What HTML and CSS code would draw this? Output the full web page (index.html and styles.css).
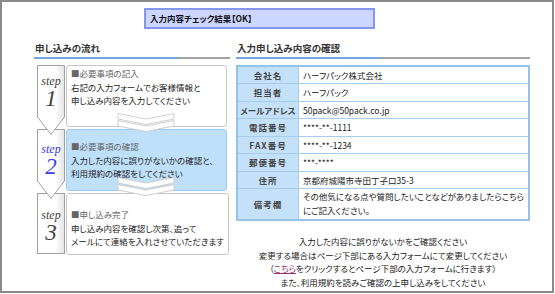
FILE: index.html
```html
<!DOCTYPE html>
<html lang="ja">
<head>
<meta charset="utf-8">
<title>入力内容チェック結果</title>
<link rel="stylesheet" href="styles.css">
</head>
<body>
<div class="frame">
  <div class="title">入力内容チェック結果【OK】</div>
  <div class="cols">
    <section class="flow">
      <h2 class="heading">申し込みの流れ</h2>
      <ol class="steps">
        <li class="step step-1">
          <div class="tab">
            <svg class="tab-shape" width="28" height="70" viewBox="0 0 28 70"><defs><linearGradient id="tg1" x1="0" x2="1" y1="0" y2="0"><stop offset="0" stop-color="#fff"/><stop offset="0.65" stop-color="#fff"/><stop offset="1" stop-color="#e4e4e4"/></linearGradient></defs><polygon points="0.5,0.5 27.5,0.5 27.5,52 14,69.5 0.5,52" fill="url(#tg1)" stroke="#a0a0a0"/></svg>
            <span class="tab-word">step</span>
            <span class="tab-num">1</span>
          </div>
          <div class="body">
            <p class="step-title">■必要事項の記入</p>
            <p>右記の入力フォームでお客様情報と<br>申し込み内容を入力してください</p>
            <svg class="chev" width="58" height="21" viewBox="0 0 58 21"><polygon points="1,0.5 29,6 57,0.5 57,6 29,11.5 1,6" fill="#fff" stroke="#cfcfcf"/><polygon points="1,7.5 29,13 57,7.5 57,13 29,18.5 1,13" fill="#fff" stroke="#cfcfcf"/></svg>
          </div>
        </li>
        <li class="step step-2">
          <div class="tab">
            <svg class="tab-shape" width="28" height="70" viewBox="0 0 28 70"><defs><linearGradient id="tg2" x1="0" x2="1" y1="0" y2="0"><stop offset="0" stop-color="#fff"/><stop offset="0.65" stop-color="#fff"/><stop offset="1" stop-color="#e4e4e4"/></linearGradient></defs><polygon points="0.5,0.5 27.5,0.5 27.5,52 14,69.5 0.5,52" fill="url(#tg2)" stroke="#a0a0a0"/></svg>
            <span class="tab-word">step</span>
            <span class="tab-num">2</span>
          </div>
          <div class="body">
            <p class="step-title">■必要事項の確認</p>
            <p>入力した内容に誤りがないかの確認と、<br>利用規約の確認をしてください</p>
            <svg class="chev" width="58" height="21" viewBox="0 0 58 21"><polygon points="1,0.5 29,6 57,0.5 57,6 29,11.5 1,6" fill="#fff" stroke="#cfcfcf"/><polygon points="1,7.5 29,13 57,7.5 57,13 29,18.5 1,13" fill="#fff" stroke="#cfcfcf"/></svg>
          </div>
        </li>
        <li class="step step-3">
          <div class="tab">
            <svg class="tab-shape" width="28" height="62" viewBox="0 0 28 62"><defs><linearGradient id="tg3" x1="0" x2="1" y1="0" y2="0"><stop offset="0" stop-color="#fff"/><stop offset="0.65" stop-color="#fff"/><stop offset="1" stop-color="#e4e4e4"/></linearGradient></defs><rect x="0.5" y="0.5" width="27" height="60" fill="url(#tg3)" stroke="#a0a0a0"/></svg>
            <span class="tab-word">step</span>
            <span class="tab-num">3</span>
          </div>
          <div class="body">
            <p class="step-title">■申し込み完了</p>
            <p>申し込み内容を確認し次第、追って<br>メールにて連絡を入れさせていただきます</p>
          </div>
        </li>
      </ol>
    </section>
    <section class="confirm">
      <h2 class="heading">入力申し込み内容の確認</h2>
      <table class="entry">
        <tr><th>会社名</th><td>ハーフパック株式会社</td></tr>
        <tr><th>担当者</th><td>ハーフパック</td></tr>
        <tr><th class="tight">メールアドレス</th><td>50pack@50pack.co.jp</td></tr>
        <tr><th>電話番号</th><td>****-**-1111</td></tr>
        <tr><th>FAX番号</th><td>****-**-1234</td></tr>
        <tr><th>郵便番号</th><td>***-****</td></tr>
        <tr><th>住所</th><td>京都府城陽市寺田丁子口35-3</td></tr>
        <tr class="tall"><th>備考欄</th><td>その他気になる点や質問したいことなどがありましたらこちら<br>にご記入ください。</td></tr>
      </table>
      <p class="note">入力した内容に誤りがないかをご確認ください<br>変更する場合はページ下部にある入力フォームにて変更してください<br>（<a href="#form">こちら</a>をクリックするとページ下部の入力フォームに行きます）<br>また、利用規約を読みご確認の上申し込みをしてください</p>
    </section>
  </div>
</div>
</body>
</html>
```

FILE: styles.css
```css
* { box-sizing: border-box; margin: 0; padding: 0; }
html, body { width: 555px; height: 294px; overflow: hidden; background: #fff; }
body {
  font-family: "Noto Sans CJK JP", "Noto Sans", sans-serif;
  font-size: 8.5px;
  color: #222;
  font-feature-settings: "palt";
}
.frame {
  width: 554px;
  height: 293px;
  border: 2px solid #8a8a8a;
}
.title {
  margin: 6px 0 0 142px;
  width: 231px;
  height: 21px;
  border: 2px solid #8696ec;
  background: #ccd6ff;
  font-weight: bold;
  padding-left: 4px;
  line-height: 17px;
  color: #111;
}
.cols {
  display: flex;
  gap: 6px;
  margin-top: 12px;
  padding-left: 32px;
}
.flow { width: 196px; }
.confirm { width: 294px; }
.heading {
  font-size: 9.5px;
  font-weight: bold;
  line-height: 14px;
  padding: 0 0 4px 1px;
  color: #333;
  background: linear-gradient(to right, #72a8de 144px, #a3a3a3 144px) left bottom / 100% 2px no-repeat;
}
.steps {
  list-style: none;
  margin-top: 6px;
  padding: 0 3px;
  display: flex;
  flex-direction: column;
  gap: 2px;
}
.step {
  display: flex;
  height: 62px;
  position: relative;
}
.step-1 { z-index: 3; }
.step-2 { z-index: 2; }
.step-3 { z-index: 1; }
.tab {
  position: relative;
  width: 28px;
  flex: none;
  display: flex;
  flex-direction: column;
  align-items: center;
  font-family: "Liberation Serif", serif;
  font-style: italic;
  color: #444;
}
.tab-shape { position: absolute; top: 0; left: 0; }
.tab-word, .tab-num { position: relative; display: block; }
.tab-word { font-size: 12px; line-height: 11px; }
.tab-num { font-size: 23px; line-height: 24px; }
.step-1 .tab { padding-top: 11px; }
.step-2 .tab { padding-top: 15px; color: #4040ee; }
.step-3 .tab { padding-top: 17px; }
.body {
  flex: 1;
  margin-left: 1px;
  border: 1px solid #c8c8c8;
  border-radius: 3px;
  padding: 1px 4px 0;
  line-height: 13.5px;
  position: relative;
  white-space: nowrap;
  background: #fff;
}
.step-2 .body {
  background: #bfe0fb;
  border-color: #9fcbef;
  padding-top: 10px;
}
.step-3 .body { padding-top: 14px; }
.step-title { color: #666; }
.chev {
  position: absolute;
  left: 50%;
  margin-left: -30px;
  bottom: -8px;
}
.entry {
  margin-top: 6px;
  width: 294px;
  border-collapse: collapse;
  border: 2px solid #94c2e9;
}
.entry th, .entry td {
  border: 1px solid #a6cdee;
  height: 17.5px;
  line-height: 14px;
  padding: 0 4px;
  white-space: nowrap;
}
.entry th {
  width: 68px;
  background: #c5e1f9;
  color: #444;
  font-weight: bold;
  letter-spacing: 1px;
  text-align: center;
  padding: 0;
}
.entry th.tight { letter-spacing: 0; }
.entry td { text-align: left; background: #fff; }
.entry .tall td { height: 31.5px; line-height: 13.5px; padding-top: 1px; padding-bottom: 2px; }
.note {
  margin-top: 14px;
  text-align: center;
  line-height: 13.5px;
  white-space: nowrap;
}
.note a { color: #993366; text-decoration: underline; }
```
